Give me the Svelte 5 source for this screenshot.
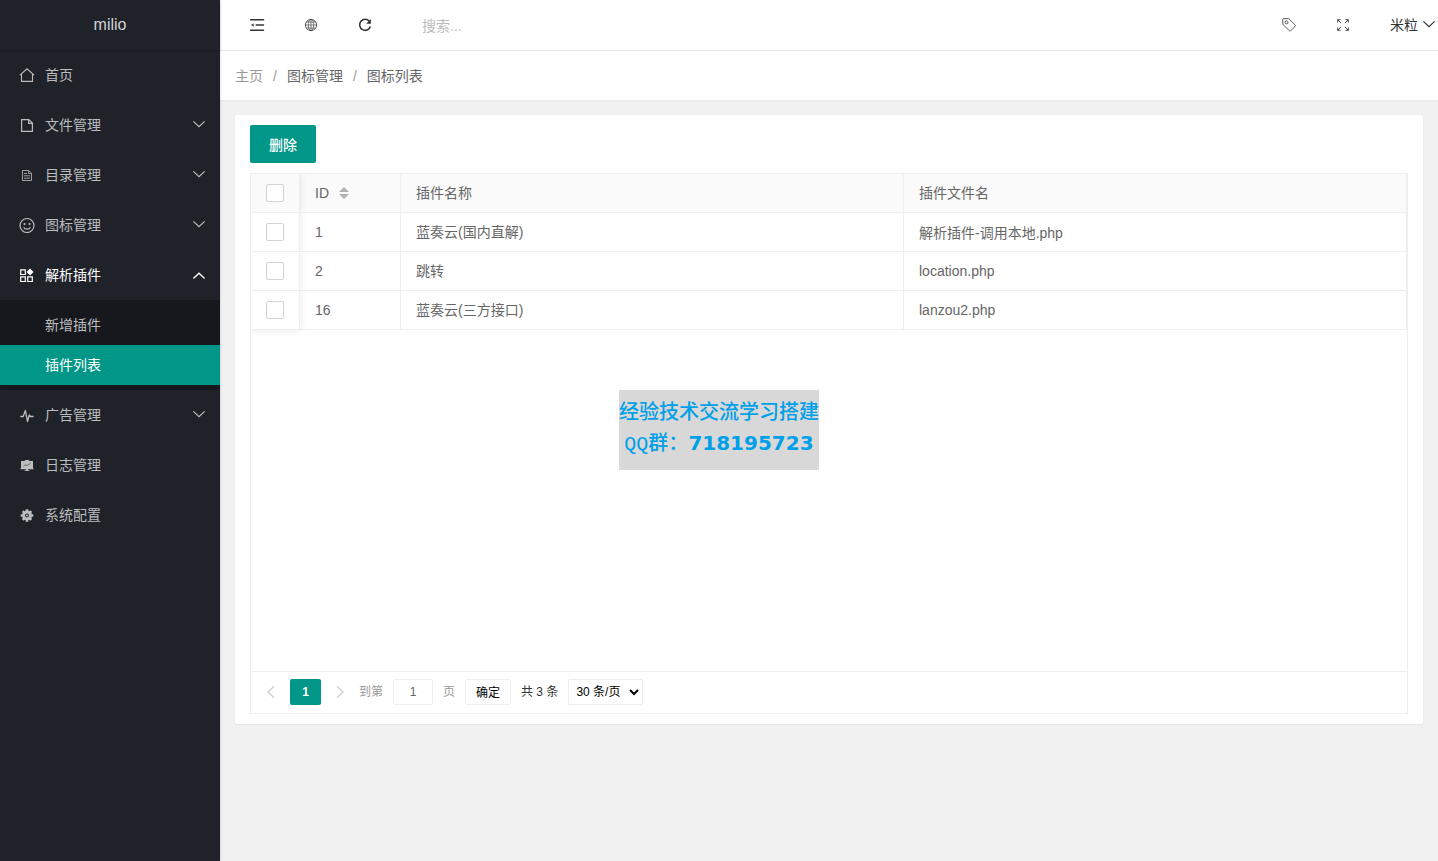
<script>
  const menu = [
    { icon: 'home', label: '首页' },
    { icon: 'file', label: '文件管理', children: [] },
    { icon: 'doc', label: '目录管理', children: [] },
    { icon: 'face', label: '图标管理', children: [] },
    { icon: 'component', label: '解析插件', open: true, children: ['新增插件', '插件列表'] },
    { icon: 'pulse', label: '广告管理', children: [] },
    { icon: 'board', label: '日志管理' },
    { icon: 'gear', label: '系统配置' }
  ];
  const rows = [
    { id: 1, name: '蓝奏云(国内直解)', file: '解析插件-调用本地.php' },
    { id: 2, name: '跳转', file: 'location.php' },
    { id: 16, name: '蓝奏云(三方接口)', file: 'lanzou2.php' }
  ];
  let active = $state('插件列表');
  let page = $state('1');
</script>

{#snippet glyph(name)}
  <svg class="glyph" viewBox="0 0 16 16" width="16" height="16" fill="none" stroke="currentColor" aria-hidden="true">
    {#if name === 'home'}
      <path d="M.9 8.2 8 1.8l7.100 6.400M2.500 7v7.400h11V7" stroke-width="1.100" />
    {:else if name === 'file'}
      <path d="M2.600 2.600h7.200l3.600 3.400v8.300H2.600zM9.600 2.800v3.500h3.600" stroke-width="1.200" />
    {:else if name === 'doc'}
      <path d="M3.500 3.500h6.200l2.800 2.700v7.300h-9zM9.500 3.700v2.700h2.800M5 6.500h3M5 8.800h6M5 11.200h6" stroke-width=".8" />
    {:else if name === 'face'}
      <circle cx="8" cy="8.500" r="7" stroke-width="1.200" />
      <path d="M4.600 10.200c1.400 2.500 5.400 2.500 6.800 0" stroke-width="1.200" />
      <circle cx="5.500" cy="7" r="1.100" fill="currentColor" stroke="none" />
      <circle cx="10.500" cy="7" r="1.100" fill="currentColor" stroke="none" />
    {:else if name === 'component'}
      <path d="M1.700 2.900h4.600v4.600H1.700zM1.700 9.900h4.600v4.600H1.700zM8.700 9.900h4.600v4.600H8.700z" stroke-width="1.200" />
      <path d="m11 1.500 3.500 3.500L11 8.500 7.500 5z" fill="currentColor" stroke="none" />
    {:else if name === 'pulse'}
      <path d="M1.300 9.500h2.900l2.200-6 2.100 11L10.200 8l1.200 1.500h3.200" stroke-width="1.300" stroke-linejoin="round" />
    {:else if name === 'board'}
      <path d="M2 4h3.500l.8-1h3.400l.8 1H14v7.300h.6v1H9v1h1.500v.8h-5v-.8H7v-1H1.400v-1H2z" fill="currentColor" stroke="none" />
      <path d="m4.400 9.200 2.400-1.400 1.800.5 3-1.900" stroke="#20222a" stroke-width=".5" />
    {:else if name === 'gear'}
      <circle cx="8" cy="8.500" r="3.400" stroke-width="3" />
      <path d="M8 2.200v2.800M8 12v2.800M1.700 8.500h2.800M11.500 8.500h2.800M3.700 4.200l1.700 1.700M10.600 11.100l1.700 1.700M3.700 12.800l1.700-1.700M10.600 5.900l1.700-1.700" stroke-width="2.500" />
      <circle cx="8" cy="8.500" r="1" fill="currentColor" stroke="none" />
    {:else if name === 'shrink'}
      <path d="M1.600 2.800h12.900M7.200 8h7.300M1.600 13.200h12.900" stroke-width="1.500" stroke-linecap="round" />
      <path d="M4.600 6.200v3.600L2.200 8z" fill="currentColor" stroke="none" />
    {:else if name === 'globe'}
      <circle cx="8" cy="8" r="5.600" stroke-width=".8" />
      <ellipse cx="8" cy="8" rx="2.700" ry="5.600" stroke-width=".6" />
      <path d="M8 2.400v11.200M2.400 8h11.200M3.300 5h9.400M3.300 11h9.400" stroke-width=".6" />
    {:else if name === 'refresh'}
      <path d="M12.400 4.300A5.500 5.500 0 1 0 13.400 9.500" stroke-width="1.600" />
      <path d="M13.900 2v4.700H9.200z" fill="currentColor" stroke="none" />
    {:else if name === 'tag'}
      <path d="M1.700 2.600Q1.700 1.800 2.500 1.700L7.700 1.500 14.300 8.100Q14.800 8.600 14.300 9.100L9.600 13.900Q9.100 14.400 8.600 13.900L1.900 7.500z" stroke-width=".8" />
      <circle cx="5.500" cy="5.400" r="1.500" stroke-width=".8" />
    {:else if name === 'expand'}
      <path d="M2.700 5.500V2.700h2.800M10.500 2.700h2.800v2.800M13.300 10.500v2.800h-2.800M5.500 13.300H2.700v-2.800M2.700 2.700l3.400 3.400M13.300 2.700 9.900 6.100M13.300 13.300 9.900 9.900M2.700 13.300l3.400-3.400" stroke-width=".9" />
    {:else if name === 'down'}
      <path d="m2.400 5.400 5.600 5.200 5.600-5.200" stroke-width="1.200" />
    {:else if name === 'up'}
      <path d="m2.400 12.400 5.600-5.200 5.600 5.200" stroke-width="1.400" />
    {:else if name === 'left'}
      <path d="M11 2.200 5 8l6 5.800" stroke-width="1.500" />
    {:else if name === 'right'}
      <path d="m5 2.200 6 5.800-6 5.800" stroke-width="1.500" />
    {/if}
  </svg>
{/snippet}

<div class="layout">
  <aside>
    <div class="logo">milio</div>
    <nav>
      {#each menu as item}
        <button class="item" class:open={item.open}>
          {@render glyph(item.icon)}
          <span>{item.label}</span>
          {#if item.children}
            <span class="arrow">{@render glyph(item.open ? 'up' : 'down')}</span>
          {/if}
        </button>
        {#if item.open}
          <div class="sub">
            {#each item.children as child}
              <button class="child" class:active={active === child} onclick={() => (active = child)}>{child}</button>
            {/each}
          </div>
        {/if}
      {/each}
    </nav>
  </aside>

  <div class="main">
    <header>
      <button class="tool" aria-label="侧边伸缩">{@render glyph('shrink')}</button>
      <button class="tool" aria-label="前台">{@render glyph('globe')}</button>
      <button class="tool" aria-label="刷新">{@render glyph('refresh')}</button>
      <input class="search" type="text" placeholder="搜索..." aria-label="搜索" />
      <div class="right">
        <button class="tool" aria-label="便签">{@render glyph('tag')}</button>
        <button class="tool" aria-label="全屏">{@render glyph('expand')}</button>
        <button class="user">米粒 {@render glyph('down')}</button>
      </div>
    </header>

    <div class="crumbs">
      <a href="#home">主页</a><i>/</i><span>图标管理</span><i>/</i><span>图标列表</span>
    </div>

    <main>
      <section class="card">
        <button class="delete">删除</button>
        <div class="grid">
          <div class="scroll">
            <table>
              <colgroup><col class="c-check" /><col class="c-id" /><col /><col /></colgroup>
              <thead>
                <tr>
                  <th class="check"><input type="checkbox" aria-label="全选" /></th>
                  <th>
                    ID
                    <svg class="sort" viewBox="0 0 10 12" width="10" height="12" aria-hidden="true"><path d="M0 5 5 0l5 5zM0 7h10l-5 5z" fill="#b2b2b2" /></svg>
                  </th>
                  <th class="cjk">插件名称</th>
                  <th class="cjk">插件文件名</th>
                </tr>
              </thead>
              <tbody>
                {#each rows as row}
                  <tr>
                    <td class="check"><input type="checkbox" aria-label={row.name} /></td>
                    <td>{row.id}</td>
                    <td class="cjk">{row.name}</td>
                    <td>{row.file}</td>
                  </tr>
                {/each}
              </tbody>
            </table>
          </div>
          <div class="pager">
            <button class="step" aria-label="上一页">{@render glyph('left')}</button>
            <button class="current">1</button>
            <button class="step" aria-label="下一页">{@render glyph('right')}</button>
            <label class="jump">到第<input type="text" bind:value={page} />页</label>
            <button class="confirm">确定</button>
            <span class="total">共 3 条</span>
            <select aria-label="每页条数">
              <option>30 条/页</option>
              <option>60 条/页</option>
              <option>90 条/页</option>
            </select>
          </div>
        </div>
      </section>
    </main>
  </div>
</div>

<div class="notice">
  <p class="brush">经验技术交流学习搭建</p>
  <p class="group"><span>QQ群：</span><b>718195723</b></p>
</div>

<style>
  :global(body) {
    background: #f1f1f1;
  }
  .layout,
  .notice {
    font-family: 'Liberation Sans', 'Noto Sans CJK SC', sans-serif;
    font-size: 14px;
  }
  .layout,
  .layout * {
    box-sizing: border-box;
  }
  .layout {
    display: flex;
    min-height: 100vh;
    color: #666;
  }
  button,
  input,
  select {
    margin: 0;
    padding: 0;
    border: 0;
    background: none;
    font: inherit;
    color: inherit;
  }
  button {
    cursor: pointer;
  }
  .glyph {
    display: block;
    flex: none;
  }

  aside {
    flex: 0 0 220px;
    background: #20222a;
    color: #bcbdbf;
    box-shadow: 1px 0 2px rgba(0, 0, 0, 0.1);
    z-index: 1;
  }
  .logo {
    height: 50px;
    line-height: 50px;
    font-size: 16px;
    text-align: center;
    color: #d2d3d4;
    box-shadow: 0 1px 2px rgba(0, 0, 0, 0.15);
  }
  .item {
    display: flex;
    align-items: center;
    width: 100%;
    height: 50px;
    padding: 0 13px 0 19px;
    gap: 10px;
    text-align: left;
  }
  .item span {
    padding-bottom: 2px;
  }
  .open,
  .child.active {
    color: #fff;
  }
  .arrow {
    margin-left: auto;
  }
  .sub {
    padding: 5px 0;
    background: #17181d;
    border-radius: 2px;
  }
  .child {
    display: block;
    width: 100%;
    height: 40px;
    padding: 0 0 2px 45px;
    text-align: left;
  }
  .active {
    background: #009688;
  }

  .main {
    flex: 1;
    min-width: 0;
  }
  header {
    display: flex;
    align-items: center;
    height: 50px;
    padding-left: 10px;
    background: #fff;
    color: #333;
  }
  .tool {
    display: grid;
    place-items: center;
    width: 54px;
    height: 50px;
  }
  .search {
    width: 180px;
    height: 50px;
    margin-left: 30px;
    padding-top: 2px;
    outline: none;
  }
  .search::placeholder {
    color: #bbb;
  }
  .right {
    display: flex;
    margin-left: auto;
  }
  .user {
    display: flex;
    align-items: center;
    gap: 3px;
    padding: 0 1px 2px 20px;
  }
  .crumbs {
    display: flex;
    height: 50px;
    padding: 0 15px;
    line-height: 50px;
    background: #fff;
    border-top: 1px solid #e8e8e8;
    box-shadow: 0 1px 2px rgba(0, 0, 0, 0.05);
  }
  .crumbs a {
    color: #999;
    text-decoration: none;
  }
  .crumbs i {
    margin: 0 10px;
    color: #999;
    font-style: normal;
  }

  main {
    padding: 15px;
  }
  .card {
    padding: 10px 15px;
    background: #fff;
    border-radius: 2px;
    box-shadow: 0 1px 2px rgba(0, 0, 0, 0.05);
  }
  .delete {
    display: block;
    height: 38px;
    margin-bottom: 10px;
    padding: 0 19px;
    border-radius: 2px;
    background: #009688;
    color: #fff;
    font-weight: 500;
  }
  .grid {
    display: flex;
    flex-direction: column;
    height: calc(100vh - 320px);
    min-height: 240px;
    border: 1px solid #eee;
  }
  .scroll {
    flex: 1;
    overflow: auto;
  }
  table {
    width: 100%;
    table-layout: fixed;
    border-collapse: separate;
    border-spacing: 0;
  }
  .c-check {
    width: 49px;
  }
  .c-id {
    width: 101px;
  }
  th,
  td {
    height: 39px;
    padding: 0 15px;
    border: solid #eee;
    border-width: 0 1px 1px 0;
    font-weight: 400;
    text-align: left;
  }
  th {
    background: #fafafa;
  }
  .cjk {
    padding-bottom: 2px;
  }
  .check {
    position: relative;
    box-shadow: 0 0 8px rgba(0, 0, 0, 0.1);
    clip-path: inset(0 -10px 0 0);
  }
  tbody tr:last-child > td.check {
    clip-path: inset(0 -10px -10px 0);
  }
  .check input {
    display: block;
    appearance: none;
    width: 18px;
    height: 18px;
    border: 1px solid #d2d2d2;
    border-radius: 2px;
    background: #fff;
  }
  .check input:checked {
    border-color: #009688;
    background: #009688;
  }
  .sort {
    margin-left: 6px;
    vertical-align: -1px;
  }

  .pager {
    display: flex;
    align-items: flex-start;
    height: 42px;
    padding: 7px;
    border-top: 1px solid #eee;
    font-size: 12px;
    line-height: 26px;
  }
  .step {
    display: grid;
    place-items: center;
    width: 26px;
    height: 26px;
    color: #d2d2d2;
  }
  .current {
    width: 31px;
    height: 26px;
    margin: 0 6px;
    border-radius: 2px;
    background: #009688;
    color: #fff;
    font-weight: 700;
  }
  .jump {
    margin-left: 6px;
    color: #999;
  }
  .jump input {
    width: 40px;
    height: 26px;
    margin: 0 10px;
    border: 1px solid #eee;
    border-radius: 2px;
    text-align: center;
    color: #666;
    vertical-align: top;
  }
  .confirm {
    width: 46px;
    height: 26px;
    margin: 0 10px;
    border: 1px solid #eee;
    border-radius: 2px;
    color: #000;
  }
  .total {
    margin-right: 10px;
    color: #333;
  }
  select {
    height: 26px;
    width: 75px;
    padding: 0 3px;
    border: 1px solid #eee;
    border-radius: 2px;
    background: #fff;
    color: #000;
  }

  .notice {
    position: fixed;
    inset: 0 0 1px;
    z-index: 5;
    width: 200px;
    height: 80px;
    margin: auto;
    overflow: hidden;
    background: #d8d8d8;
    color: #00a0e9;
    text-align: center;
    white-space: nowrap;
  }
  .notice p {
    margin: 0;
  }
  .brush {
    padding-top: 5px;
    font: 500 20px/32px KaiTi, STKaiti, 'Noto Sans CJK SC', serif;
  }
  .group {
    display: flex;
    justify-content: center;
    align-items: baseline;
    font-size: 20px;
    line-height: 32px;
  }
  .group span {
    font-family: 'Liberation Mono', 'Noto Sans CJK SC', monospace;
    font-weight: 500;
  }
  .group b {
    font: 700 20px/32px 'Arial Black', 'DejaVu Sans', sans-serif;
  }
</style>
